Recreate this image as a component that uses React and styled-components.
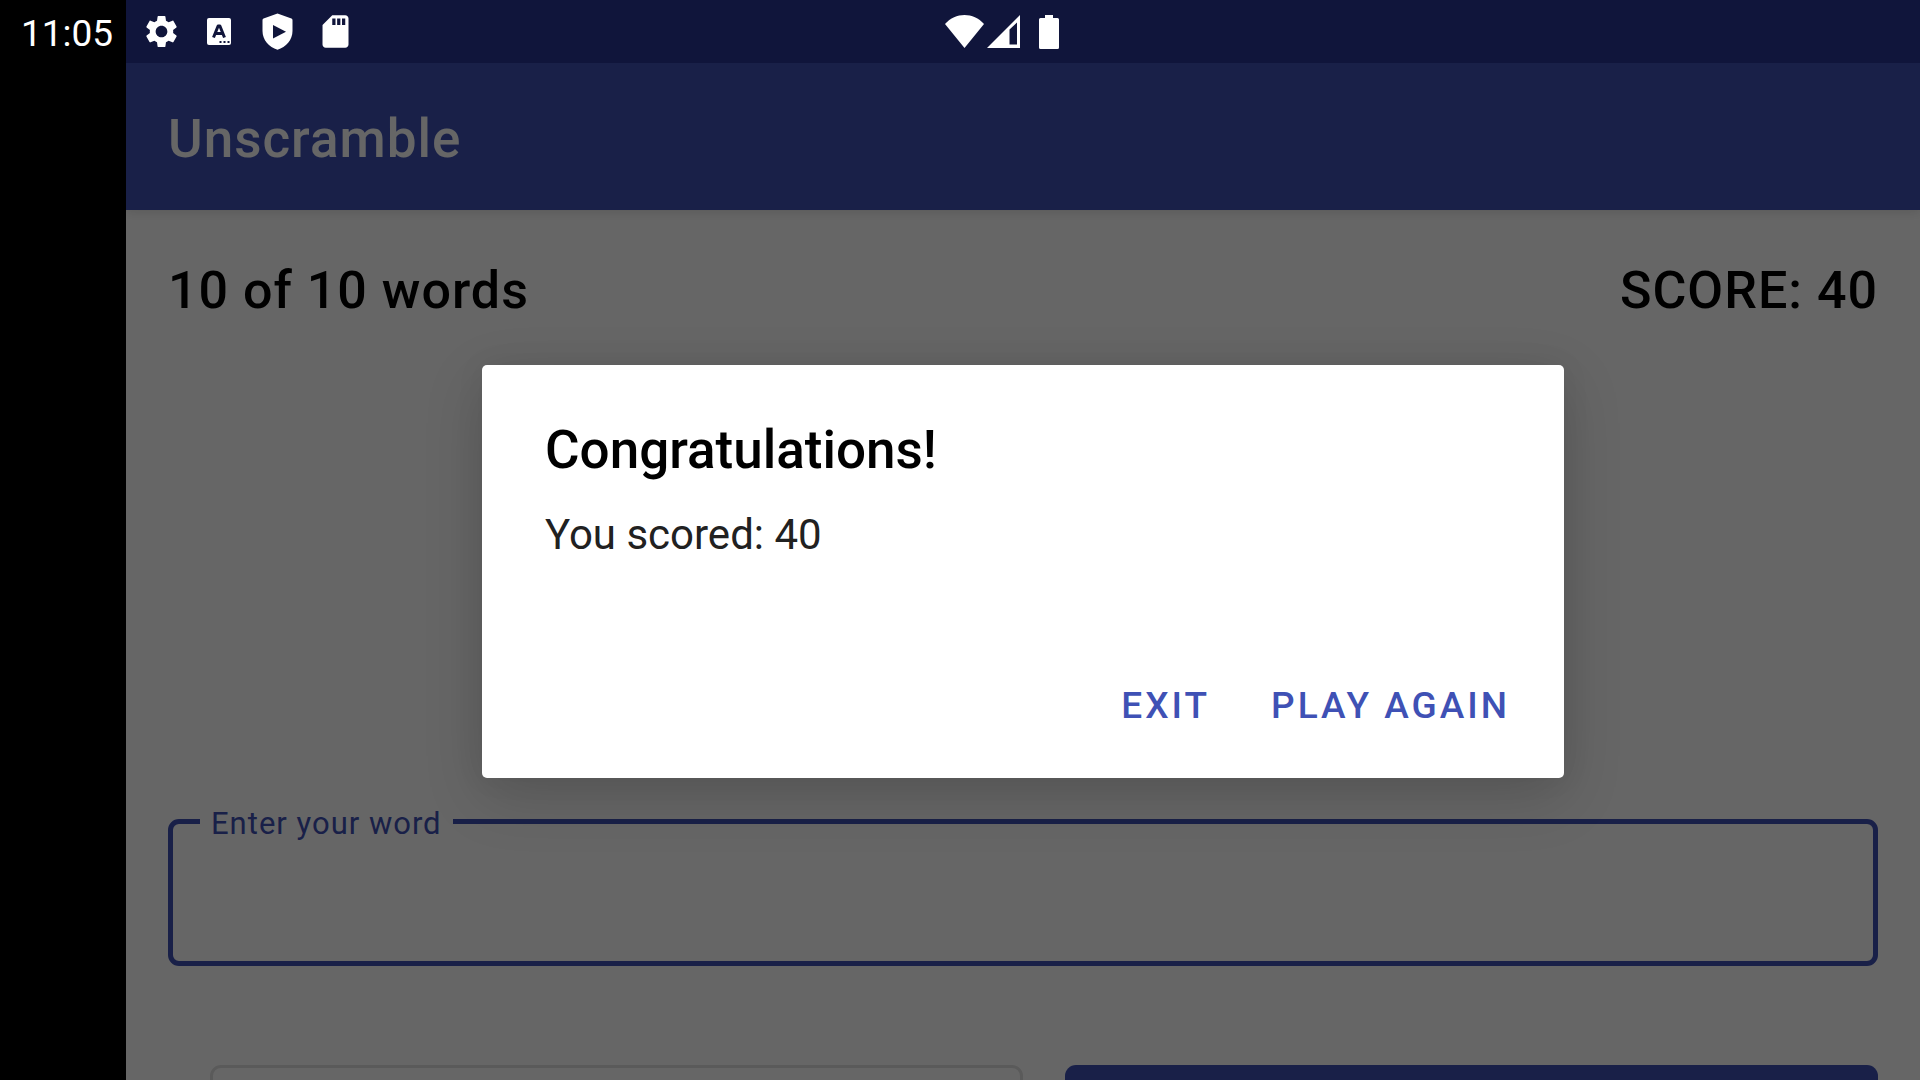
import React from "react";
import styled, { createGlobalStyle } from "styled-components";

const GlobalStyle = createGlobalStyle`
  * { box-sizing: border-box; }
  html, body { margin: 0; background: #000; }
  body { font-family: Roboto, sans-serif; overflow: hidden; }
`;

const Screen = styled.div`
  display: grid;
  grid-template-columns: 126px minmax(0, 1fr);
  height: 100vh;
  overflow: hidden;
  background: #000;
`;

const CutoutArea = styled.div`
  padding: 12px 0 0 21px;
  color: #fff;
  font-size: 37px;
  line-height: 43px;
`;

const Device = styled.div`
  display: flex;
  flex-direction: column;
  min-width: 0;
  min-height: 0;
`;

const StatusBar = styled.header`
  display: grid;
  grid-template-columns: 1fr auto 1fr;
  align-items: center;
  flex: none;
  height: 63px;
  padding: 0 58px 0 16px;
  background: #10153b;
`;

const Notifications = styled.div`
  display: flex;
  gap: 19px;
`;

const SystemIcons = styled.div`
  display: flex;
  align-items: center;
`;

const Glyph = styled.svg`
  display: block;
  flex: none;
  fill: #fff;
  margin-left: ${(p) => p.$gap || 0}px;
`;

const Window = styled.div`
  position: relative;
  flex: 1;
  min-height: 0;
  overflow: hidden;
  background: #fff;
`;

const AppBar = styled.div`
  display: flex;
  align-items: center;
  height: 147px;
  padding: 4px 42px 0;
  background: #3f51b5;
  box-shadow: 0 2px 10px rgba(0, 0, 0, 0.12);
`;

const AppTitle = styled.h1`
  margin: 0;
  color: #fff;
  font-size: 53px;
  font-weight: 500;
  line-height: 62px;
  letter-spacing: 1px;
`;

const Game = styled.main`
  padding: 50px 42px 0;
`;

const Progress = styled.div`
  display: flex;
  justify-content: space-between;
  color: #000;
  font-size: 52px;
  font-weight: 500;
  line-height: 62px;
  letter-spacing: 1px;
`;

const WordArea = styled.div`
  height: 481px;
`;

const Outline = styled.fieldset`
  display: block;
  height: 163px;
  margin: 0;
  padding: 0 27px;
  border: 5px solid #3f51b5;
  border-radius: 11px;
`;

const FieldLegend = styled.legend`
  padding: 4px 11px 0;
  color: #3f51b5;
  font-size: 31px;
  line-height: 33px;
  letter-spacing: 1px;
`;

const WordInput = styled.input`
  width: 100%;
  height: 100%;
  padding: 0 11px;
  border: 0;
  outline: 0;
  background: transparent;
  font: 42px/49px Roboto, sans-serif;
`;

const GameActions = styled.div`
  display: grid;
  grid-template-columns: 1fr 1fr;
  gap: 42px;
  margin: 99px 0 0 42px;
`;

const GameButton = styled.button`
  height: 95px;
  border: ${(p) => (p.$filled ? "0" : "3px solid #e0e0e0")};
  border-radius: 11px;
  background: ${(p) => (p.$filled ? "#3f51b5" : "transparent")};
`;

const Scrim = styled.div`
  position: absolute;
  inset: 0;
  display: flex;
  align-items: center;
  justify-content: center;
  background: rgba(0, 0, 0, 0.6);
`;

const Dialog = styled.section`
  width: min(100%, 1082px);
  padding: 54px 34px 39px 63px;
  border-radius: 5px;
  background: #fff;
  box-shadow: 0 18px 60px rgba(0, 0, 0, 0.16), 0 0 30px rgba(0, 0, 0, 0.06);
`;

const DialogTitle = styled.h2`
  margin: 0;
  color: #000;
  font-size: 53px;
  font-weight: 500;
  line-height: 62px;
`;

const DialogText = styled.p`
  margin: 29px 0 0;
  color: #212121;
  font-size: 42px;
  line-height: 49px;
`;

const DialogActions = styled.div`
  display: flex;
  justify-content: flex-end;
  gap: 21px;
  margin-top: 112px;
`;

const DialogButton = styled.button`
  padding: 13px 20px 12px;
  border: 0;
  background: transparent;
  color: #3f51b5;
  font: 500 37px/43px Roboto, sans-serif;
  letter-spacing: 3px;
  text-transform: uppercase;
`;

const GearIcon = () => (
  <Glyph width="39" height="39" viewBox="0 0 24 24" aria-hidden="true">
    <path d="M19.14 12.94c.04-.3.06-.61.06-.94 0-.32-.02-.64-.07-.94l2.03-1.58c.18-.14.23-.41.12-.61l-1.92-3.32c-.12-.22-.37-.29-.59-.22l-2.39.96c-.5-.38-1.03-.7-1.62-.94l-.36-2.54c-.04-.24-.24-.41-.48-.41h-3.84c-.24 0-.43.17-.47.41l-.36 2.54c-.59.24-1.13.57-1.62.94l-2.39-.96c-.22-.08-.47 0-.59.22L2.74 8.87c-.12.21-.08.47.12.61l2.03 1.58c-.05.3-.09.63-.09.94s.02.64.07.94l-2.03 1.58c-.18.14-.23.41-.12.61l1.92 3.32c.12.22.37.29.59.22l2.39-.96c.5.38 1.03.7 1.62.94l.36 2.54c.05.24.24.41.48.41h3.84c.24 0 .44-.17.47-.41l.36-2.54c.59-.24 1.13-.56 1.62-.94l2.39.96c.22.08.47 0 .59-.22l1.92-3.32c.12-.22.07-.47-.12-.61l-2.01-1.58zM12 15.6c-1.98 0-3.6-1.62-3.6-3.6s1.62-3.6 3.6-3.6 3.6 1.62 3.6 3.6-1.62 3.6-3.6 3.6z" />
  </Glyph>
);

const KeyboardIcon = () => (
  <Glyph width="39" height="39" viewBox="0 0 39 39" aria-hidden="true">
    <rect x="7" y="6" width="24" height="27" rx="2" />
    <path
      d="M13.500 25.500l4.600-11.500h1.800L24.500 25.500M15.500 21.500h7"
      fill="none"
      stroke="#10153b"
      strokeWidth="3"
      strokeLinejoin="round"
    />
    <path fill="#10153b" d="M19.5 29h2v2h-2zM23.5 29h2v2h-2zM27.5 29h2v2h-2z" />
  </Glyph>
);

const ShieldIcon = () => (
  <Glyph width="39" height="39" viewBox="0 0 39 39" aria-hidden="true">
    <path
      fillRule="evenodd"
      d="M19.5 1.5 33.4 6.6Q34.5 7 34.5 8.2V19C34.5 28 28 35 19.5 37.8 11 35 4.5 28 4.5 19V8.2Q4.5 7 5.6 6.6ZM15 13v13.5l13-6.7Z"
    />
  </Glyph>
);

const SdCardIcon = () => (
  <Glyph width="39" height="39" viewBox="0 0 24 24" aria-hidden="true">
    <path d="M18 2h-8L4.02 8 4 20c0 1.1.9 2 2 2h12c1.1 0 2-.9 2-2V4c0-1.1-.9-2-2-2zm-6 6h-2V4h2v4zm3 0h-2V4h2v4zm3 0h-2V4h2v4z" />
  </Glyph>
);

const WifiIcon = () => (
  <Glyph width="39" height="33" viewBox="0 0 39 33" aria-hidden="true">
    <path d="M0 9C10.5-3 28.5-3 39 9L19.5 33Z" />
  </Glyph>
);

const SignalIcon = () => (
  <Glyph $gap={3} width="33" height="33" viewBox="0 0 33 33" aria-hidden="true">
    <path fillRule="evenodd" d="M33 0v33H0ZM22.5 14.5v15H30V7.5Z" />
  </Glyph>
);

const BatteryIcon = () => (
  <Glyph $gap={19} width="20" height="34" viewBox="0 0 20 34" aria-hidden="true">
    <path d="M6 0h8v3h4.500Q20 3 20 4.500v28Q20 34 18.500 34h-17Q0 34 0 32.500v-28Q0 3 1.500 3H6Z" />
  </Glyph>
);

export default function App() {
  return (
    <Screen>
      <GlobalStyle />
      <CutoutArea>
        <time>11:05</time>
      </CutoutArea>
      <Device>
        <StatusBar>
          <Notifications>
            <GearIcon />
            <KeyboardIcon />
            <ShieldIcon />
            <SdCardIcon />
          </Notifications>
          <SystemIcons>
            <WifiIcon />
            <SignalIcon />
            <BatteryIcon />
          </SystemIcons>
        </StatusBar>
        <Window>
          <AppBar>
            <AppTitle>Unscramble</AppTitle>
          </AppBar>
          <Game>
            <Progress>
              <span>10 of 10 words</span>
              <span>SCORE: 40</span>
            </Progress>
            <WordArea />
            <Outline>
              <FieldLegend>
                <label htmlFor="word">Enter your word</label>
              </FieldLegend>
              <WordInput id="word" type="text" />
            </Outline>
            <GameActions>
              <GameButton type="button" aria-label="Skip" />
              <GameButton type="button" aria-label="Submit" $filled />
            </GameActions>
          </Game>
          <Scrim>
            <Dialog role="dialog" aria-modal="true" aria-labelledby="dialog-title">
              <DialogTitle id="dialog-title">Congratulations!</DialogTitle>
              <DialogText>You scored: 40</DialogText>
              <DialogActions>
                <DialogButton type="button">Exit</DialogButton>
                <DialogButton type="button">Play again</DialogButton>
              </DialogActions>
            </Dialog>
          </Scrim>
        </Window>
      </Device>
    </Screen>
  );
}
